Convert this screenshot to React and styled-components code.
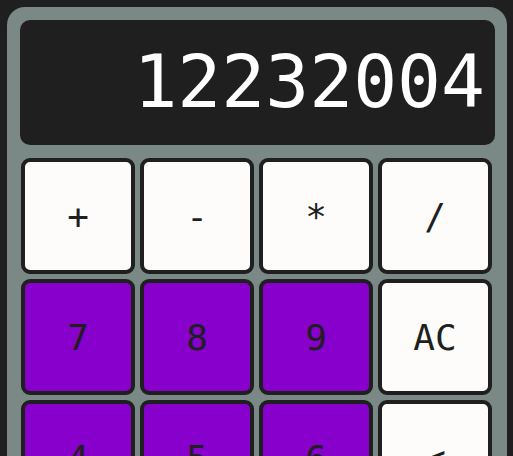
import React from 'react';
import styled, { createGlobalStyle } from 'styled-components';

const keys = [
  { label: '+', kind: 'op' },
  { label: '-', kind: 'op' },
  { label: '*', kind: 'op' },
  { label: '/', kind: 'op' },
  { label: '7', kind: 'num' },
  { label: '8', kind: 'num' },
  { label: '9', kind: 'num' },
  { label: 'AC', kind: 'op' },
  { label: '4', kind: 'num' },
  { label: '5', kind: 'num' },
  { label: '6', kind: 'num' },
  { label: '<', kind: 'op' },
  { label: '1', kind: 'num' },
  { label: '2', kind: 'num' },
  { label: '3', kind: 'num' },
  { label: '=', kind: 'op' },
];

const App = () => {
  return (
    <>
      <GlobalStyle />
      <Calculator>
        <Display>12232004</Display>
        <Keypad>
          {keys.map((k) => (
            <Key key={k.label} $num={k.kind === 'num'}>
              {k.label}
            </Key>
          ))}
        </Keypad>
      </Calculator>
    </>
  );
};

const GlobalStyle = createGlobalStyle`
  body {
    margin: 0;
    background: #201f20;
    font-family: "DejaVu Sans Mono", monospace;
  }
`;
const Calculator = styled.div`
  margin: 7px 6px 0 7px;
  padding: 13px 12px 13px 13px;
  background: #7a8886;
  border-radius: 18px;
`;
const Display = styled.div`
  height: 125px;
  box-sizing: border-box;
  padding: 0 10px;
  background: #201f20;
  border-radius: 10px;
  color: #ffffff;
  font-size: 73px;
  line-height: 124px;
  text-align: right;
`;
const Keypad = styled.div`
  display: grid;
  grid-template-columns: repeat(4, 1fr);
  grid-auto-rows: 116px;
  gap: 5px;
  margin: 13px 3px 0 1px;
`;
const Key = styled.button`
  box-sizing: border-box;
  border: 4px solid #201f20;
  border-radius: 9px;
  background: ${(p) => (p.$num ? '#8800cc' : '#fdfcfb')};
  color: #201f20;
  font-family: "DejaVu Sans Mono", monospace;
  font-size: 36px;
  padding: 0;
`;

export default App;
